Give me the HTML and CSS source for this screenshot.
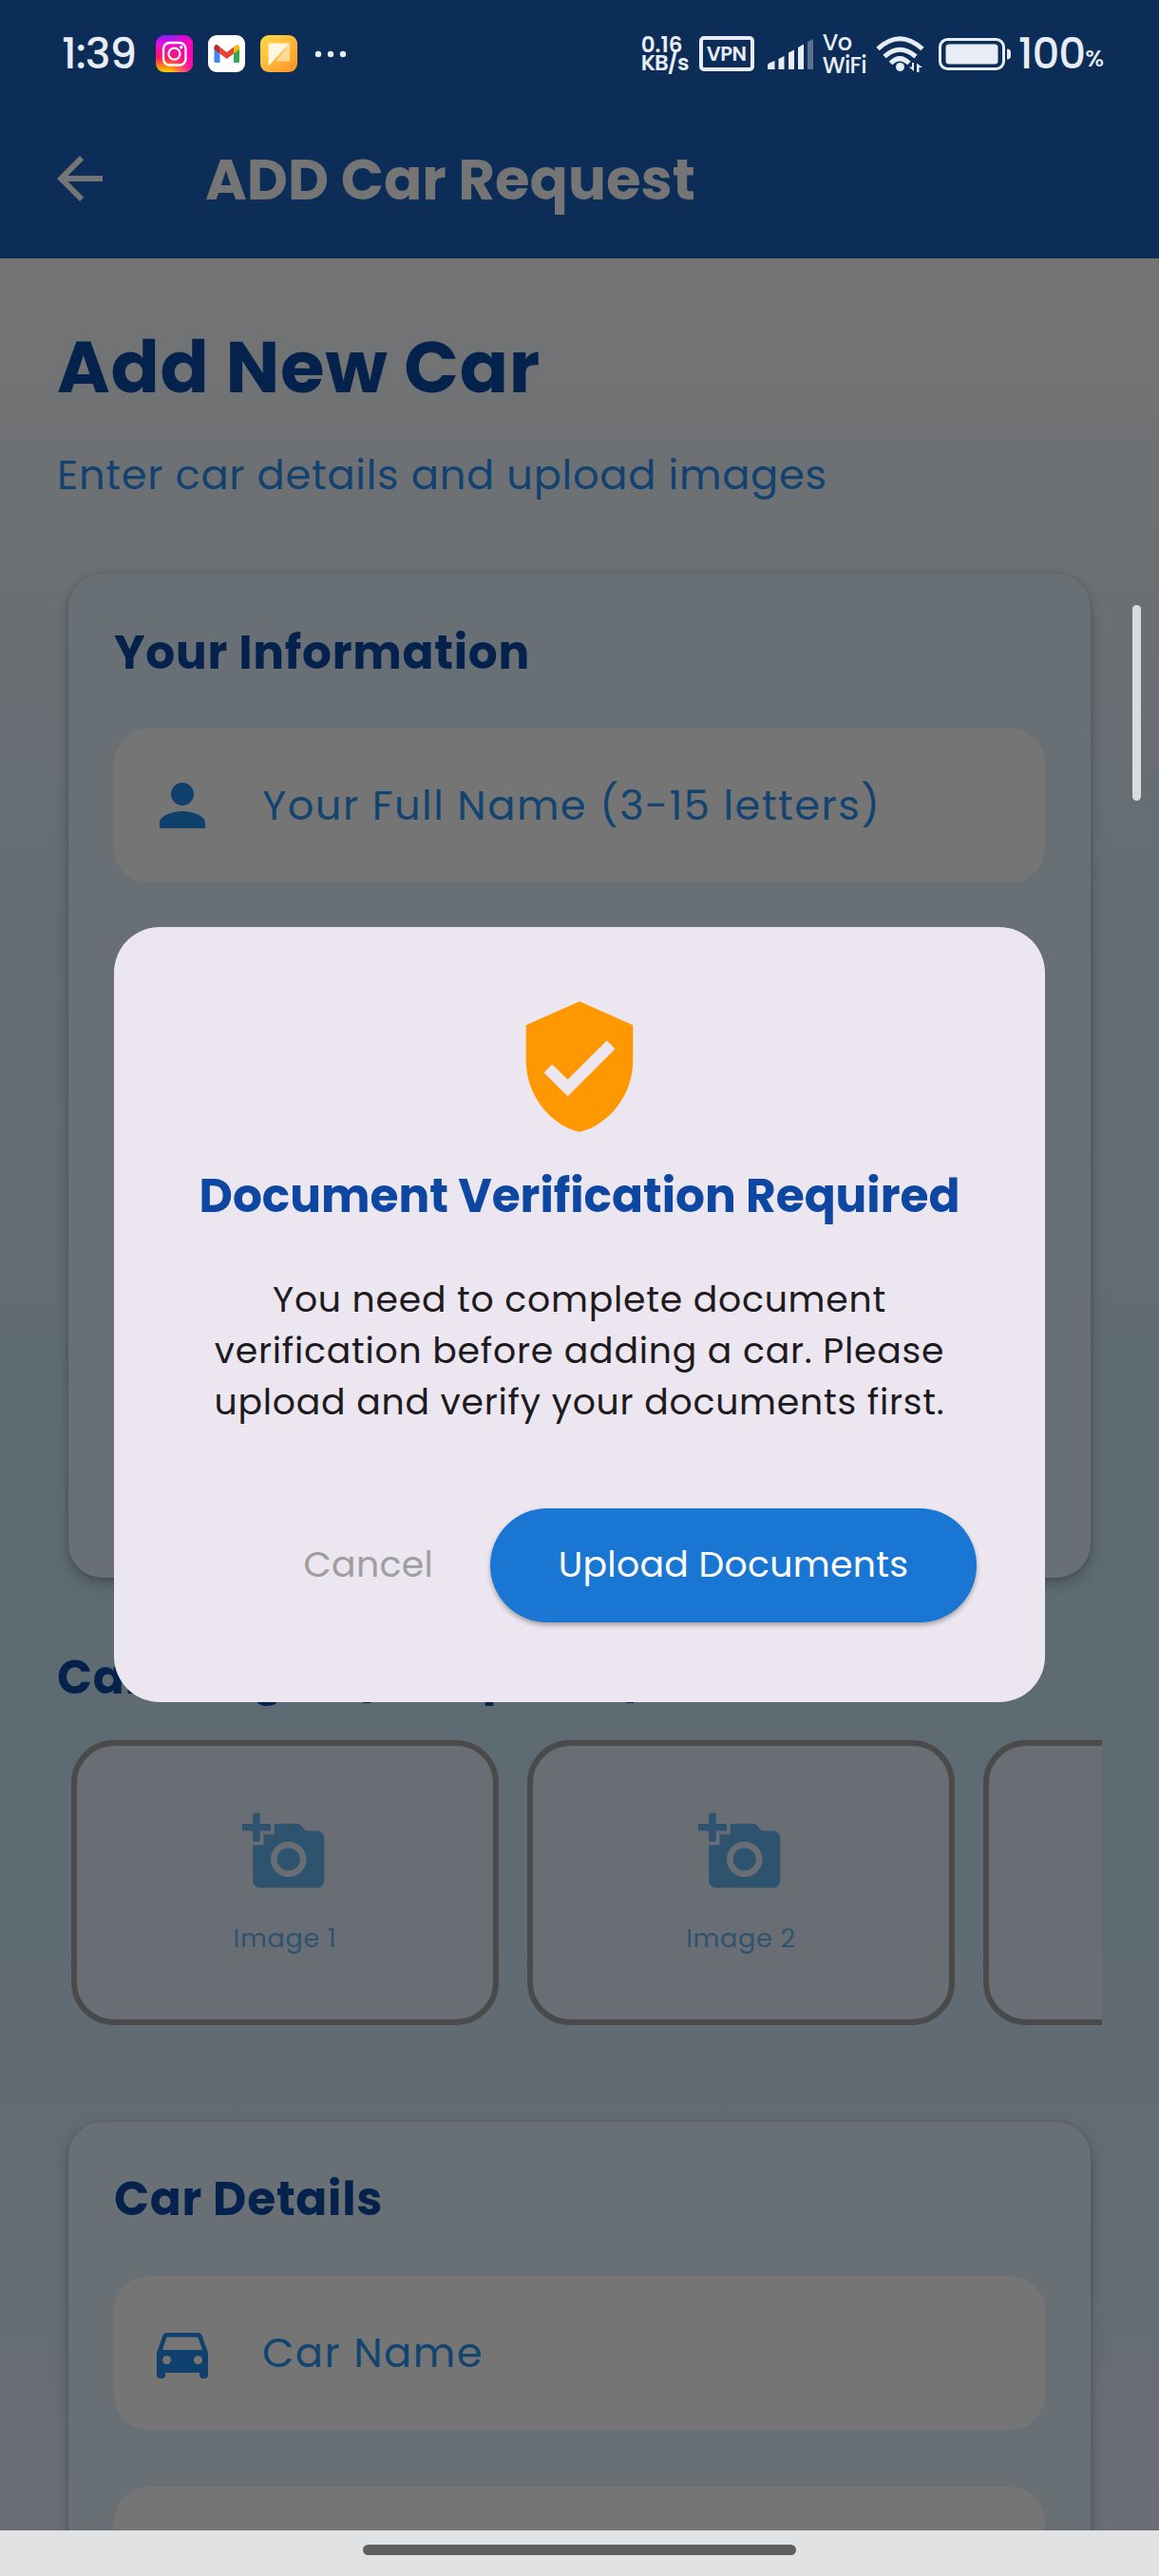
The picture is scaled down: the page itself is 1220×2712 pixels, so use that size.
FILE: index.html
```html
<!DOCTYPE html>
<html lang="en">
<head>
<meta charset="utf-8">
<title>ADD Car Request</title>
<link rel="stylesheet" href="styles.css">
</head>
<body>
<div class="screen">
  <header class="top">
    <div class="status">
      <span class="time">1:39</span>
      <svg class="app-icon" viewBox="0 0 39 39">
        <defs>
          <linearGradient id="ig" x1="0" y1="0" x2="0" y2="1"><stop offset="0" stop-color="#8a1cff"/><stop offset=".25" stop-color="#e80fd8"/><stop offset=".6" stop-color="#ff1464"/><stop offset=".85" stop-color="#ff8a10"/><stop offset="1" stop-color="#ffd400"/></linearGradient>
          <linearGradient id="igr" x1="0" y1="0" x2="1" y2="0"><stop offset=".4" stop-color="#ff00b8" stop-opacity="0"/><stop offset="1" stop-color="#ff00b8"/></linearGradient>
          <linearGradient id="ye" x1="0" y1="0" x2="1" y2="1"><stop offset="0" stop-color="#ffdc4a"/><stop offset="1" stop-color="#ff9228"/></linearGradient>
        </defs>
        <rect width="39" height="39" rx="9" fill="url(#ig)"/>
        <rect width="39" height="39" rx="9" fill="url(#igr)"/>
        <g fill="none" stroke="#fff" stroke-width="2.3"><rect x="8" y="8" width="23.500" height="23.500" rx="6.500"/><circle cx="19.500" cy="19.700" r="6"/></g>
        <circle cx="26.700" cy="12.700" r="1.700" fill="#fff"/>
      </svg>
      <svg class="app-icon" viewBox="0 0 39 39">
        <rect width="39" height="39" rx="9" fill="#fff"/>
        <path d="M6.500 13v14.500q0 1.500 1.500 1.500h4.500V16.500z" fill="#4285f4"/>
        <path d="M33 13v14.500q0 1.500-1.500 1.500H27V16.500z" fill="#34a853"/>
        <path d="M27 12.500l2-1.800c2-1.500 4 0 4 2.300v1.800l-6 4.700z" fill="#fbbc04"/>
        <path d="M12.500 12.500l7.200 5.600 7.300-5.600v7l-7.300 5.500-7.200-5.500z" fill="#ea4335"/>
        <path d="M6.500 13c0-2.300 2-3.800 4-2.300l2 1.800v7l-6-4.700z" fill="#c5221f"/>
      </svg>
      <svg class="app-icon" viewBox="0 0 39 39">
        <rect width="39" height="39" rx="9" fill="url(#ye)"/>
        <path d="M31 8.500v17q0 2-2 2H16.500L31 8.500z" fill="#ffdc96"/>
        <path d="M9.500 8.500H31L8.500 32.500V9.500q0-1 1-1z" fill="#fff6e2"/>
      </svg>
      <svg class="dots" viewBox="0 0 34 8" fill="#e8ecf4"><circle cx="4" cy="4" r="3.200"/><circle cx="17" cy="4" r="3.200"/><circle cx="30" cy="4" r="3.200"/></svg>
      <div class="status-right">
        <div class="speed"><span>0.16</span><span class="unit">KB/s</span></div>
        <span class="vpn">VPN</span>
        <svg class="signal" viewBox="0 0 48 32" fill="#e8ecf4"><path d="M0 32v-4q0-2 1.500-2.500L7.500 23v9z"/><path d="M11.500 32V21l6-3v14z"/><path d="M22 32V14.500l6-3V32z"/><path d="M32 32V9l6-3.500V32z"/><path d="M42 32V3l6-3v32z" opacity=".36"/></svg>
        <div class="vowifi"><span>Vo</span><span>WiFi</span></div>
        <svg class="wifi" viewBox="0 0 51 38"><g fill="none" stroke="#e8ecf4" stroke-width="5"><path d="M2 13.500Q25 -8 49 13.500"/><path d="M9 21.500Q25 7 42 21.500"/><path d="M15.500 28.500Q25 19 35 28.500"/></g><circle cx="25.500" cy="32.500" r="4.500" fill="#e8ecf4"/><path d="M40 28v9l-5-4.500h3V28zM43 38V28.500l6 4.500h-3.500v5z" fill="#e8ecf4"/></svg>
        <svg class="battery" viewBox="0 0 77 34"><rect x="1.500" y="1.500" width="67" height="31" rx="8" fill="none" stroke="#e8ecf4" stroke-width="3"/><rect x="7.500" y="6.500" width="55" height="21" rx="3.500" fill="#e8ecf4"/><path d="M72 11.500q4 0 4 4v3q0 4-4 4z" fill="#e8ecf4"/></svg>
        <span class="pct">100</span><span class="pct-sign">%</span>
      </div>
    </div>
    <div class="appbar">
      <svg class="back" viewBox="0 0 24 24"><path fill="#757575" d="M20 11H7.830l5.590-5.590L12 4l-8 8 8 8 1.410-1.410L7.830 13H20z"/></svg>
      <h1 class="appbar-title">ADD Car Request</h1>
    </div>
  </header>

  <main class="content">
    <h2 class="headline">Add New Car</h2>
    <p class="sub">Enter car details and upload images</p>

    <section class="card card-info">
      <h3 class="section-title">Your Information</h3>
      <div class="field">
        <svg class="field-icon" viewBox="0 0 24 24"><path d="M12 12c2.210 0 4-1.790 4-4s-1.790-4-4-4-4 1.790-4 4 1.790 4 4 4zm0 2c-2.670 0-8 1.340-8 4v2h16v-2c0-2.660-5.330-4-8-4z"/></svg>
        <span class="hint">Your Full Name (3-15 letters)</span>
      </div>
    </section>

    <h3 class="section-title images-title">Car Images (4 required)</h3>
    <div class="images">
      <div class="tile">
        <svg class="camera" viewBox="0 0 24 24"><path d="M3 4V1h2v3h3v2H5v3H3V6H0V4h3zm3 6V7h3V4h7l1.830 2H21c1.100 0 2 .9 2 2v12c0 1.100-.9 2-2 2H5c-1.100 0-2-.9-2-2V10h3zm7 9c2.760 0 5-2.240 5-5s-2.240-5-5-5-5 2.240-5 5 2.240 5 5 5zm-3.200-5c0 1.770 1.430 3.200 3.200 3.200s3.200-1.430 3.200-3.200-1.430-3.200-3.200-3.200-3.200 1.430-3.200 3.200z"/></svg>
        <span class="tile-label">Image 1</span>
      </div>
      <div class="tile">
        <svg class="camera" viewBox="0 0 24 24"><path d="M3 4V1h2v3h3v2H5v3H3V6H0V4h3zm3 6V7h3V4h7l1.830 2H21c1.100 0 2 .9 2 2v12c0 1.100-.9 2-2 2H5c-1.100 0-2-.9-2-2V10h3zm7 9c2.760 0 5-2.240 5-5s-2.240-5-5-5-5 2.240-5 5 2.240 5 5 5zm-3.200-5c0 1.770 1.430 3.200 3.200 3.200s3.200-1.430 3.200-3.200-1.430-3.200-3.200-3.200-3.200 1.430-3.200 3.200z"/></svg>
        <span class="tile-label">Image 2</span>
      </div>
      <div class="tile"></div>
    </div>

    <section class="card card-details">
      <h3 class="section-title">Car Details</h3>
      <div class="field">
        <svg class="field-icon" viewBox="0 0 24 24"><path d="M18.920 6.010C18.720 5.420 18.160 5 17.500 5h-11c-.66 0-1.210.42-1.420 1.010L3 12v8c0 .55.45 1 1 1h1c.55 0 1-.45 1-1v-1h12v1c0 .55.45 1 1 1h1c.55 0 1-.45 1-1v-8l-2.080-5.990zM6.500 16c-.83 0-1.500-.67-1.500-1.500S5.670 13 6.500 13s1.500.67 1.500 1.500S7.330 16 6.500 16zm11 0c-.83 0-1.500-.67-1.500-1.500s.67-1.500 1.500-1.500 1.500.67 1.500 1.500-.67 1.500-1.500 1.500zM5 11l1.500-4.500h11L19 11H5z"/></svg>
        <span class="hint">Car Name</span>
      </div>
      <div class="field"></div>
    </section>
  </main>

  <div class="scrollbar"></div>

  <div class="dialog">
    <svg class="shield" viewBox="0 0 24 24"><path fill="#ff9800" d="M12 1L3 5v6c0 5.550 3.840 10.740 9 12 5.160-1.260 9-6.450 9-12V5l-9-4zm-2 16l-4-4 1.410-1.410L10 14.170l6.590-6.590L18 9l-8 8z"/></svg>
    <h2 class="dialog-title">Document Verification Required</h2>
    <p class="dialog-body">You need to complete document<br>verification before adding a car. Please<br>upload and verify your documents first.</p>
    <div class="actions">
      <span class="cancel">Cancel</span>
      <span class="upload">Upload Documents</span>
    </div>
  </div>

  <footer class="navbar"><div class="handle"></div></footer>
</div>
</body>
</html>
```
FILE: styles.css
```css
* { box-sizing: border-box; }
body {
  margin: 0;
  font-family: Poppins, Inter, "Open Sans", sans-serif;
}
h1, h2, h3, p { margin: 0; }
svg { display: block; flex: none; }

.screen {
  position: relative;
  display: flex;
  flex-direction: column;
  width: 1220px;
  height: 2712px;
  overflow: hidden;
}

/* status bar and app bar */
.top { height: 272px; flex: none; background: #0b2d57; }
.status {
  display: flex;
  align-items: center;
  height: 104px;
  padding: 9px 58px 0 65px;
  color: #e8ecf4;
}
.time { width: 99px; font-size: 45px; font-weight: 500; line-height: 44px; letter-spacing: -1px; }
.app-icon { width: 39px; height: 39px; margin-right: 16px; }
.dots { width: 34px; height: 8px; margin-left: 2px; }
.status-right { display: flex; align-items: center; margin-left: auto; }
.speed, .vowifi { display: flex; flex-direction: column; white-space: nowrap; }
.speed { width: 61px; font-size: 23px; font-weight: 600; line-height: 19px; }
.unit { letter-spacing: -1px; }
.vpn {
  width: 58px;
  height: 37px;
  margin-right: 14px;
  border: 4px solid #e8ecf4;
  border-radius: 5px;
  font-size: 21px;
  font-weight: 600;
  line-height: 30px;
  letter-spacing: -.5px;
  text-align: center;
}
.signal { width: 48px; height: 32px; margin-right: 10px; }
.vowifi { width: 56px; font-size: 24px; font-weight: 500; line-height: 24px; letter-spacing: -.7px; }
.wifi { width: 51px; height: 38px; margin-right: 15px; }
.battery { width: 77px; height: 34px; margin-right: 7px; }
.pct { font-size: 45px; font-weight: 500; line-height: 44px; letter-spacing: -1px; }
.pct-sign { padding-top: 10px; font-size: 25px; font-weight: 500; line-height: 30px; }

.appbar { display: flex; align-items: center; height: 168px; padding-left: 48px; }
.back { width: 72px; height: 72px; margin-right: 96px; }
.appbar-title { padding-top: 4px; color: #757575; font-size: 59.400px; font-weight: 700; line-height: 80px; white-space: nowrap; }

/* form */
.content {
  flex: 1;
  min-height: 0;
  overflow: hidden;
  padding: 65px 60px 0;
  background: linear-gradient(#747474 0, #6c7073 288px, #646c73 690px, #5e6b73 1330px, #5e6b73 1700px, #636b73 2000px, #6b6e76 2392px);
  letter-spacing: .75px;
  white-space: nowrap;
}
.headline { color: #05224d; font-size: 75.600px; font-weight: 700; line-height: 100px; }
.sub { margin-top: 31px; color: #124270; font-size: 43.200px; line-height: 64px; }
.card {
  margin: 0 12px;
  padding: 45px 48px 0;
  border-radius: 36px;
  background: #686f75;
  box-shadow: 0 7px 14px rgba(0, 0, 0, .22), 0 1px 5px rgba(0, 0, 0, .12);
}
.card-info { height: 1057px; margin-top: 72px; }
.card-details { height: 900px; margin-top: 102px; padding-top: 43px; }
.section-title { color: #05224d; font-size: 48.600px; font-weight: 700; line-height: 77px; }
.field {
  display: flex;
  align-items: center;
  height: 162px;
  margin-top: 41px;
  padding-left: 36px;
  border-radius: 36px;
  background: #757575;
}
.card-details .field { margin-top: 42px; }
.card-details .field + .field { margin-top: 60px; }
.field-icon { width: 72px; height: 72px; margin-right: 48px; fill: #10406c; }
.hint { color: #12446f; font-size: 43.200px; line-height: 64px; letter-spacing: 1.500px; }
.images-title { margin-top: 67px; }
.images { display: flex; gap: 30px; margin-top: 27px; padding-left: 15px; overflow: hidden; }
.tile {
  display: flex;
  flex: none;
  flex-direction: column;
  align-items: center;
  width: 450px;
  height: 300px;
  padding-top: 67px;
  border: 6px solid #4a4a4a;
  border-radius: 45px;
  background: #686e74;
}
.camera { width: 90px; height: 90px; fill: #2d536f; }
.tile-label { margin-top: 26px; color: #2d536f; font-size: 27px; line-height: 40px; }

/* edge scroll indicator */
.scrollbar { position: absolute; top: 637px; left: 1192px; width: 9px; height: 206px; border-radius: 5px; background: #dadbdd; }

/* verification dialog */
.dialog {
  position: absolute;
  top: 976px;
  left: 120px;
  display: flex;
  flex-direction: column;
  align-items: center;
  width: 980px;
  height: 816px;
  padding: 72px 72px 0;
  border-radius: 48px;
  background: #ece6f0;
  white-space: nowrap;
}
.shield { width: 150px; height: 150px; }
.dialog-title { margin-top: 25px; color: #0d47a1; font-size: 48.600px; font-weight: 700; line-height: 72px; }
.dialog-body { margin-top: 46px; color: #1d1b20; font-size: 37.800px; line-height: 54px; letter-spacing: .75px; text-align: center; }
.actions { display: flex; align-items: center; align-self: stretch; justify-content: flex-end; margin-top: 85px; font-size: 37.800px; line-height: 56px; letter-spacing: .3px; }
.cancel { margin-right: 60px; padding-bottom: 2px; color: #9e9e9e; }
.upload {
  display: flex;
  align-items: center;
  justify-content: center;
  width: 512px;
  height: 120px;
  padding-bottom: 2px;
  border-radius: 60px;
  background: #1976d2;
  box-shadow: 0 3px 5px rgba(0, 0, 0, .3);
  color: #fff;
}

/* gesture bar */
.navbar { display: flex; flex: none; justify-content: center; height: 48px; padding-top: 15px; background: #e1e2e4; }
.handle { width: 456px; height: 11px; border-radius: 6px; background: #5f5f5f; }
```
